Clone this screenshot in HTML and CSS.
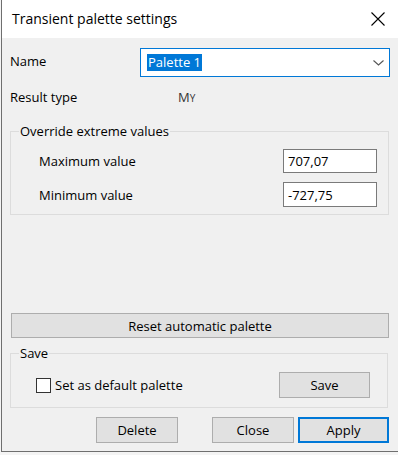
FILE: index.html
```html
<!DOCTYPE html>
<html>
<head>
<meta charset="utf-8">
<link rel="stylesheet" href="styles.css">
</head>
<body>
<div class="window">
  <div class="titlebar">
    <span class="title">Transient palette settings</span>
    <svg class="close" width="14" height="14" viewBox="0 0 14 14"><path d="M0.5 0.5 L13.5 13.5 M13.5 0.5 L0.5 13.5" stroke="#000" stroke-width="1.1" fill="none"/></svg>
  </div>
  <div class="content">
    <div class="row name-row">
      <span class="label">Name</span>
      <div class="combo">
        <span class="sel">Palette 1</span>
        <svg class="chev" width="11" height="6" viewBox="0 0 11 6"><path d="M0.5 0.5 L5.5 5 L10.5 0.5" stroke="#555" stroke-width="1.1" fill="none"/></svg>
      </div>
    </div>
    <div class="row result-row">
      <span class="label">Result type</span>
      <span class="my">M<span class="sub">Y</span></span>
    </div>
    <fieldset class="group group-ext">
      <legend>Override extreme values</legend>
      <div class="vrow">
        <span>Maximum value</span>
        <div class="field">707,07</div>
      </div>
      <div class="vrow">
        <span>Minimum value</span>
        <div class="field">-727,75</div>
      </div>
    </fieldset>
    <div class="btn reset">Reset automatic palette</div>
    <fieldset class="group group-save">
      <legend>Save</legend>
      <div class="save-row">
        <label class="check"><span class="box"></span>Set as default palette</label>
        <div class="btn save">Save</div>
      </div>
    </fieldset>
    <div class="footer">
      <div class="btn fbtn">Delete</div>
      <div class="btn fbtn close-btn">Close</div>
      <div class="btn fbtn apply">Apply</div>
    </div>
  </div>
</div>
</body>
</html>
```
FILE: styles.css
```css
html, body {
  margin: 0;
  padding: 0;
  background: #f4f4f4;
}
body {
  padding-left: 1px;
  font-family: "Open Sans", "Noto Sans", sans-serif;
  font-size: 13px;
  color: #000;
}
.window {
  width: 397px;
  height: 452px;
  border-left: 1px solid #6f6f6f;
  border-bottom: 1px solid #6f6f6f;
  background: #f0f0f0;
  box-sizing: border-box;
}
.titlebar {
  height: 38px;
  background: #fff;
  display: flex;
  align-items: center;
  justify-content: space-between;
  padding: 0 13px 0 10px;
}
.title {
  font-size: 14px;
  margin-top: -1px;
}
.close {
  margin-top: -1px;
}
.content {
  padding: 10px 8px 0 8px;
  display: flex;
  flex-direction: column;
}
.row {
  display: flex;
  align-items: center;
}
.label {
  width: 130px;
  flex: none;
}
.name-row {
  height: 29px;
}
.name-row .label {
  margin-top: -3px;
}
.combo {
  flex: 1;
  height: 29px;
  box-sizing: border-box;
  border: 1px solid #0078d7;
  background: #fff;
  display: flex;
  align-items: center;
  justify-content: space-between;
  padding: 0 5px 0 6px;
}
.sel {
  background: #0078d7;
  color: #fff;
  line-height: 17px;
  padding: 0 1px;
}
.result-row {
  height: 20px;
  margin-top: 10px;
}
.my {
  margin-left: 38px;
  color: #333;
}
.sub {
  font-size: 10px;
}
.group {
  margin: 0;
  border: 1px solid #dcdcdc;
  padding: 0;
}
.group legend {
  padding: 0 1px;
  line-height: 16px;
}
.group-ext {
  margin-top: 16px;
  margin-right: 1px;
  padding: 10px 11px 7px 28px;
  display: flex;
  flex-direction: column;
  gap: 9px;
}
.group-ext legend {
  margin-left: -20px;
}
.vrow {
  display: flex;
  align-items: center;
  justify-content: space-between;
  height: 24px;
}
.vrow:last-child {
  height: 25px;
}
.field {
  width: 94px;
  height: 100%;
  box-sizing: border-box;
  border: 1px solid #7a7a7a;
  background: #fff;
  padding-left: 4px;
  display: flex;
  align-items: center;
}
.btn {
  background: #e1e1e1;
  border: 1px solid #adadad;
  box-sizing: border-box;
  display: flex;
  align-items: center;
  justify-content: center;
}
.reset {
  margin-top: 98px;
  margin-left: 1px;
  margin-right: 1px;
  height: 25px;
}
.group-save {
  margin-top: 7px;
  margin-right: 2px;
  padding: 11px 17px 9px 25px;
}
.group-save legend {
  margin-left: -17px;
}
.save-row {
  display: flex;
  align-items: center;
  justify-content: space-between;
  height: 26px;
}
.check {
  display: flex;
  align-items: center;
  gap: 4px;
}
.box {
  width: 15px;
  height: 15px;
  box-sizing: border-box;
  border: 1px solid #333;
  background: #fff;
}
.save {
  width: 91px;
  height: 26px;
}
.footer {
  margin-top: 9px;
  display: flex;
  justify-content: flex-end;
  gap: 4px;
  padding-right: 1px;
}
.fbtn {
  width: 82px;
  height: 26px;
}
.close-btn {
  margin-left: 30px;
}
.apply {
  width: 91px;
  border: 2px solid #0078d7;
}
```
